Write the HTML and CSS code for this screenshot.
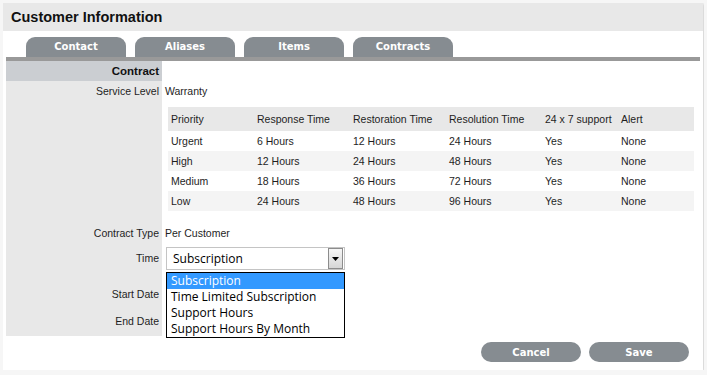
FILE: index.html
```html
<!DOCTYPE html>
<html lang="en">
<head>
    <meta charset="UTF-8">
    <title>Customer Information</title>
    <link rel="stylesheet" href="styles.css">
</head>
<body>

    <div class="panel">
        <div class="panel-header">Customer Information</div>

        <!-- Tabs -->
        <div class="tabs">
            <div class="tab">Contact</div>
            <div class="tab">Aliases</div>
            <div class="tab">Items</div>
            <div class="tab">Contracts</div>
        </div>
        <div class="tab-line"></div>

        <!-- Contract form -->
        <div class="form">
            <div class="row row-head">
                <div class="label">Contract</div>
                <div class="value"></div>
            </div>
            <div class="row">
                <div class="label">Service Level</div>
                <div class="value">Warranty</div>
            </div>
            <div class="row row-table">
                <div class="label"></div>
                <div class="value">
                    <table class="sla">
                        <colgroup>
                            <col style="width: 86px">
                            <col style="width: 96px">
                            <col style="width: 96px">
                            <col style="width: 96px">
                            <col style="width: 76px">
                            <col>
                        </colgroup>
                        <tr class="sla-head">
                            <td>Priority</td><td>Response Time</td><td>Restoration Time</td><td>Resolution Time</td><td>24 x 7 support</td><td>Alert</td>
                        </tr>
                        <tr>
                            <td>Urgent</td><td>6 Hours</td><td>12 Hours</td><td>24 Hours</td><td>Yes</td><td>None</td>
                        </tr>
                        <tr>
                            <td>High</td><td>12 Hours</td><td>24 Hours</td><td>48 Hours</td><td>Yes</td><td>None</td>
                        </tr>
                        <tr>
                            <td>Medium</td><td>18 Hours</td><td>36 Hours</td><td>72 Hours</td><td>Yes</td><td>None</td>
                        </tr>
                        <tr>
                            <td>Low</td><td>24 Hours</td><td>48 Hours</td><td>96 Hours</td><td>Yes</td><td>None</td>
                        </tr>
                    </table>
                </div>
            </div>
            <div class="row">
                <div class="label">Contract Type</div>
                <div class="value">Per Customer</div>
            </div>
            <div class="row row-input">
                <div class="label">Time</div>
                <div class="value">
                    <div class="select">
                        Subscription
                        <span class="select-btn">
                            <svg width="7" height="4" viewBox="0 0 7 4"><path d="M0 0H7L3.5 4Z" fill="#000"/></svg>
                        </span>
                    </div>
                    <ul class="options">
                        <li class="selected">Subscription</li>
                        <li>Time Limited Subscription</li>
                        <li>Support Hours</li>
                        <li>Support Hours By Month</li>
                    </ul>
                </div>
            </div>
            <div class="row row-date">
                <div class="label">Start Date</div>
                <div class="value"></div>
            </div>
            <div class="row row-date row-last">
                <div class="label">End Date</div>
                <div class="value"></div>
            </div>
        </div>

        <!-- Buttons -->
        <div class="actions">
            <button class="btn">Cancel</button>
            <button class="btn">Save</button>
        </div>
    </div>

</body>
</html>
```

FILE: styles.css
```css
/* Global Styles */
body {
    margin: 3px;
    background: #f6f6f6;
    font-family: 'Liberation Sans', Arial, sans-serif;
    font-size: 10.5px;
    color: #1e1e1e;
}

/* Panel */
.panel {
    width: 700px;
    height: 367px;
    background: #fff;
    box-shadow: 1px 1px 3px rgba(0, 0, 0, 0.18);
    display: flex;
    flex-direction: column;
}

.panel-header {
    height: 28px;
    line-height: 28px;
    background: #e8e8e8;
    padding-left: 8px;
    font-size: 14.5px;
    font-weight: bold;
    color: #111;
}

/* Tabs */
.tabs {
    display: flex;
    gap: 9px;
    margin-top: 6px;
    padding-left: 23px;
}

.tab {
    width: 100px;
    height: 20px;
    line-height: 20px;
    text-align: center;
    background: #868c91;
    border-radius: 9px 9px 0 0;
    color: #fff;
    font-family: 'DejaVu Sans', Verdana, sans-serif;
    font-size: 10px;
    font-weight: bold;
}

.tab-line {
    height: 4px;
    margin: 0 3px;
    background: #999;
}

/* Form rows */
.form {
    margin: 0 3px;
}

.row {
    display: flex;
    height: 20px;
    line-height: 20px;
}

.label {
    width: 153px;
    padding-right: 3px;
    background: #e8e8e8;
    text-align: right;
}

.value {
    flex: 1;
    padding-left: 3px;
    position: relative;
}

.row-head .label {
    background: #cbced2;
    font-weight: bold;
    font-size: 11.5px;
    color: #111;
}

.row-table {
    height: auto;
}

.row-table .value {
    padding: 6px 6px 12px 6px;
}

.row-input {
    height: 38px;
}

.row-input .label {
    padding-top: 4px;
    line-height: 23px;
}

.row-date {
    height: 27px;
    line-height: 27px;
}

.row-last {
    height: 28px;
}

/* SLA table */
.sla {
    width: 526px;
    border-collapse: collapse;
    table-layout: fixed;
}

.sla td {
    height: 20px;
    padding: 0 3px;
    line-height: 20px;
    white-space: nowrap;
}

.sla .sla-head td {
    height: 24px;
    background: #e8e8e8;
}

.sla tr:nth-child(odd):not(.sla-head) td {
    background: #f4f4f4;
}

/* Select */
.select {
    position: relative;
    box-sizing: border-box;
    width: 179px;
    height: 23px;
    margin: 4px 0 0 1px;
    padding-left: 6px;
    border: 1px solid #c4c4c4;
    background: #fff;
    font-family: 'Open Sans', sans-serif;
    font-size: 12px;
    line-height: 21px;
    color: #000;
}

.select-btn {
    position: absolute;
    top: 0;
    bottom: 0;
    right: 1px;
    width: 13px;
    border: 1px solid #8c8c8c;
    background: linear-gradient(#f6f6f6, #d6d6d6);
    display: flex;
    align-items: center;
    justify-content: center;
}

.options {
    position: absolute;
    top: 29px;
    left: 4px;
    width: 177px;
    margin: 0;
    padding: 0;
    list-style: none;
    border: 1px solid #000;
    background: #fff;
    font-family: 'Open Sans', sans-serif;
    font-size: 12px;
    line-height: 16px;
    color: #000;
}

.options li {
    height: 16px;
    padding-left: 4px;
    white-space: nowrap;
}

.options .selected {
    background: #3399ff;
    color: #fff;
}

/* Buttons */
.actions {
    display: flex;
    justify-content: flex-end;
    gap: 8px;
    margin-top: 6px;
    padding-right: 14px;
}

.btn {
    width: 100px;
    height: 20px;
    padding: 0;
    border: none;
    border-radius: 10px;
    background: #868c91;
    color: #fff;
    font-family: 'DejaVu Sans', Verdana, sans-serif;
    font-size: 10px;
    font-weight: bold;
}
```
